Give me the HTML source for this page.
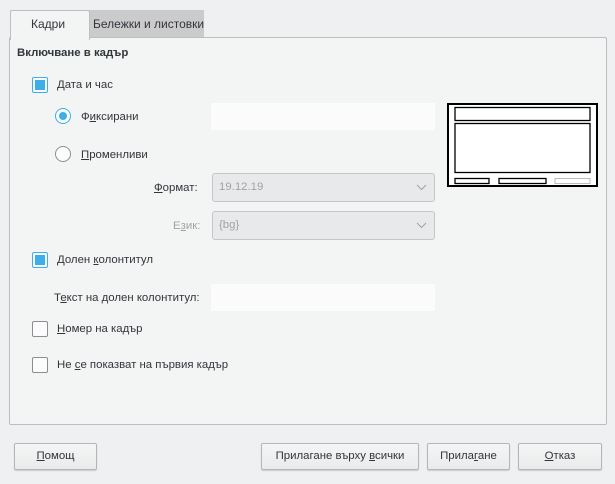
<!DOCTYPE html><html><head><style>
body{margin:0;width:615px;height:484px;background:#eff0f1;font-family:"Liberation Sans",sans-serif;font-size:11.4px;color:#31363b;position:relative;overflow:hidden}
.a{position:absolute}
.t{position:absolute;white-space:nowrap;line-height:14px}
.cb{position:absolute;width:14px;height:14px;border:1px solid #8a8e92;border-radius:2px;background:#fcfcfc}
.cb.on{border-color:#3daee9}
.cb.on:after{content:"";position:absolute;left:2px;top:2px;width:10px;height:10px;background:#3daee9}
.rb{position:absolute;width:14px;height:14px;border:1px solid #8a8e92;border-radius:50%;background:#fcfcfc}
.rb.on{border-color:#3daee9}
.rb.on:after{content:"";position:absolute;left:3px;top:3px;width:8px;height:8px;border-radius:50%;background:#3daee9}
.in{position:absolute;background:#fbfbfb}
.cmb{position:absolute;border:1px solid #c4c6c8;border-radius:3px;background:#e8e9ea;color:#a0a3a6}
.btn{position:absolute;height:25px;border:1px solid #b4b6b8;border-radius:2px;background:linear-gradient(#f4f5f5,#eaebec);text-align:center;line-height:25px;box-shadow:0 1px 1px rgba(0,0,0,.15)}
u{text-decoration:underline}
</style></head><body>
<div class="a" style="left:9px;top:37px;width:596px;height:386px;background:#f3f4f4;border:1px solid #bcbebf;border-radius:2px"></div>
<div class="a" style="left:89px;top:10px;width:115px;height:27px;background:#cbcbcb"></div>
<div class="t" style="left:93px;top:17px;font-size:12px">Бележки и листовки</div>
<div class="a" style="left:10px;top:10px;width:78px;height:29px;background:#f3f4f4;border:1px solid #bcbebf;border-bottom:none;border-radius:2px 2px 0 0"></div>
<div class="t" style="left:31px;top:17px;font-size:12px">Кадри</div>
<div class="t" style="left:17px;top:46px;font-weight:bold">Включване в кадър</div>
<div class="cb on" style="left:32px;top:77px"></div>
<div class="t" style="left:57px;top:78px"><u>Д</u>ата и час</div>
<div class="rb on" style="left:55px;top:108px"></div>
<div class="t" style="left:81px;top:110px">Ф<u>и</u>ксирани</div>
<div class="in" style="left:211px;top:103px;width:224px;height:27px"></div>
<div class="rb" style="left:55px;top:146px"></div>
<div class="t" style="left:81px;top:148px"><u>П</u>роменливи</div>
<div class="t" style="left:154px;top:181px"><u>Ф</u>ормат:</div>
<div class="cmb" style="left:212px;top:173px;width:221px;height:27px"><span class="t" style="left:6px;top:6px">19.12.19</span><svg class="a" style="left:203px;top:10px" width="11" height="7"><path d="M1 1l4.5 4.5L10 1" fill="none" stroke="#a0a3a6"/></svg></div>
<div class="t" style="left:173px;top:219px;color:#a0a3a6">Е<u>з</u>ик:</div>
<div class="cmb" style="left:212px;top:211px;width:221px;height:27px"><span class="t" style="left:6px;top:6px">{bg}</span><svg class="a" style="left:203px;top:10px" width="11" height="7"><path d="M1 1l4.5 4.5L10 1" fill="none" stroke="#a0a3a6"/></svg></div>
<svg class="a" style="left:447px;top:103px" width="151" height="84"><rect x="1" y="1" width="149" height="82" fill="#fff" stroke="#000" stroke-width="2"/><rect x="8" y="4.5" width="135" height="13" fill="none" stroke="#000" stroke-width="1.3"/><rect x="8" y="20.5" width="135" height="49" fill="none" stroke="#000" stroke-width="1.3"/><rect x="8" y="75.5" width="34" height="5" fill="none" stroke="#000" stroke-width="1.3"/><rect x="52" y="75.5" width="47" height="5" fill="none" stroke="#000" stroke-width="1.3"/><rect x="108" y="75.5" width="35" height="5" fill="none" stroke="#bbb" stroke-width="1"/></svg>
<div class="cb on" style="left:32px;top:252px"></div>
<div class="t" style="left:57px;top:253px">Долен <u>к</u>олонтитул</div>
<div class="t" style="left:54px;top:291px">Т<u>е</u>кст на долен колонтитул:</div>
<div class="in" style="left:211px;top:284px;width:224px;height:27px"></div>
<div class="cb" style="left:32px;top:321px"></div>
<div class="t" style="left:57px;top:322px"><u>Н</u>омер на кадър</div>
<div class="cb" style="left:32px;top:357px"></div>
<div class="t" style="left:57px;top:358px">Не <u>с</u>е показват на първия кадър</div>
<div class="btn" style="left:14px;top:443px;width:81px"><u>П</u>омощ</div>
<div class="btn" style="left:261px;top:443px;width:156px">Прилагане върху <u>в</u>сички</div>
<div class="btn" style="left:427px;top:443px;width:81px">Прила<u>г</u>ане</div>
<div class="btn" style="left:518px;top:443px;width:82px"><u>О</u>тказ</div>
</body></html>
